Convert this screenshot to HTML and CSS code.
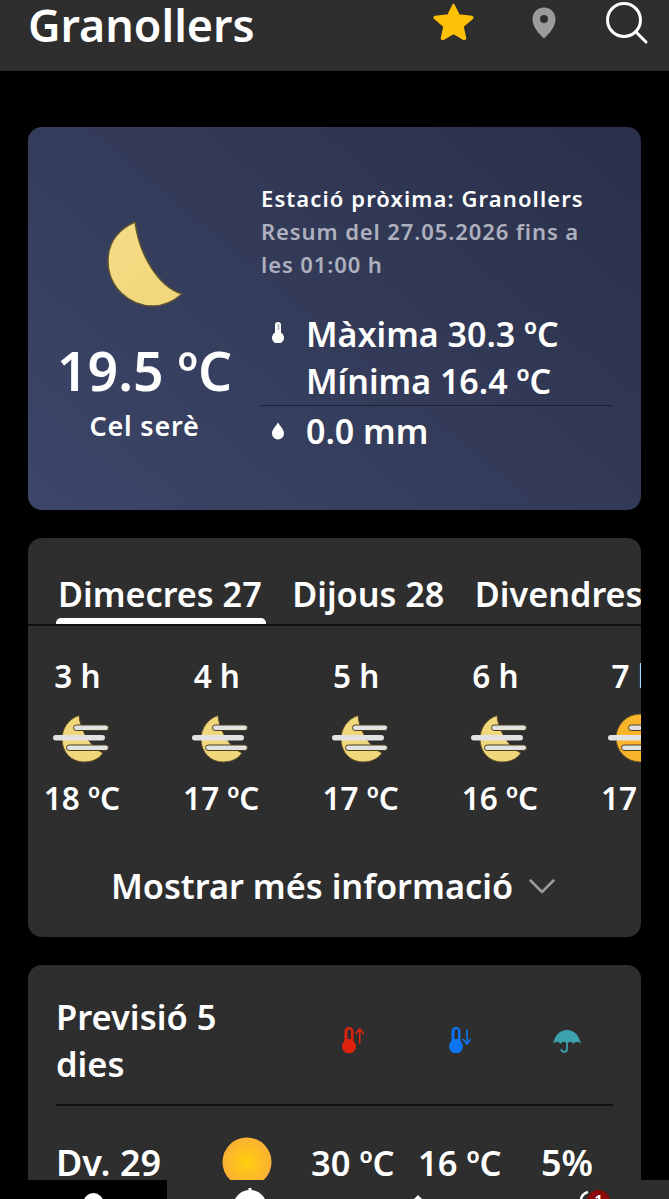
FILE: index.html
```html
<!DOCTYPE html>
<html lang="ca">
<head>
<meta charset="UTF-8" />
<meta name="viewport" content="width=device-width, initial-scale=1" />
<title>Granollers</title>
<link rel="stylesheet" href="styles.css">
</head>
<body>

<svg class="defs" width="0" height="0">
  <defs>
    <linearGradient id="moonFill" x1="0" y1="0" x2="1" y2="1">
      <stop offset="0" stop-color="#f5dc85" />
      <stop offset="1" stop-color="#f0d77c" />
    </linearGradient>
    <radialGradient id="sunFill">
      <stop offset="0" stop-color="#ffcf0d" />
      <stop offset="1" stop-color="#fbb034" />
    </radialGradient>
    <symbol id="fog-moon" viewBox="0 0 56 48">
      <path d="M26 0.500 C15 4 9 14 9 24 C9 37 18 47 31 47 C39 47 46 44 50 38 C38 33 27 15 26 0.500 Z" fill="#f0d77c" stroke="#5c4f28" stroke-width="1" />
      <rect x="20.500" y="10" width="35" height="5.500" rx="2.700" fill="#e2e2e2" stroke="#4a3f20" stroke-width="1" />
      <rect x="13.500" y="30" width="42" height="5.500" rx="2.700" fill="#e2e2e2" stroke="#4a3f20" stroke-width="1" />
      <rect x="0" y="20" width="52" height="5.500" rx="2.700" fill="#e2e2e2" />
    </symbol>
    <symbol id="thermo" viewBox="0 0 22 27">
      <path fill-rule="evenodd" d="M2.500 4.500 A4.500 4.500 0 0 1 11.500 4.500 V14 A7 7 0 1 1 2.500 14 Z M5.500 4 V12 H9 V4 A1.750 1.750 0 0 0 5.500 4 Z" />
    </symbol>
  </defs>
</svg>

<header class="topbar">
  <h1>Granollers</h1>
  <div class="topbar-icons">
    <svg class="icon-star" viewBox="0 0 24 24" preserveAspectRatio="none"><path d="M12 1.500 L15.200 8.300 L22.600 9.200 C23.200 9.300 23.400 10 23 10.400 L17.500 15.500 L19 22.800 C19.100 23.400 18.500 23.800 18 23.500 L12 19.800 L6 23.500 C5.500 23.800 4.900 23.400 5 22.800 L6.500 15.500 L1 10.400 C0.600 10 0.800 9.300 1.400 9.200 L8.800 8.300 Z" fill="#ffc107" stroke="#ffc107" stroke-linejoin="round" /></svg>
    <svg class="icon-pin" viewBox="0 0 24 32"><path fill-rule="evenodd" d="M12 0.500 C5 0.500 0.500 6 0.500 12.500 C0.500 20 8 28 12 31.500 C16 28 23.500 20 23.500 12.500 C23.500 6 19 0.500 12 0.500 Z M12 8 A4 4 0 1 1 12 16 A4 4 0 1 1 12 8 Z" fill="#9b9b9b" /></svg>
    <svg class="icon-search" viewBox="0 0 44 44"><circle cx="19" cy="19" r="16.500" fill="none" stroke="#fff" stroke-width="3" /><path d="M31 31 L41 41" stroke="#fff" stroke-width="3" stroke-linecap="round" /></svg>
  </div>
</header>

<main class="content">

  <section class="card now">
    <div class="now-left">
      <svg class="now-moon" viewBox="0 0 76 86"><path d="M28 1 C12 8 1 21 1 40 C1 66 22 85 46 85 C57 85 67 80 75 73 C50 65 32 32 28 1 Z" fill="url(#moonFill)" stroke="#5f5432" stroke-width="1.500" stroke-linejoin="round" /></svg>
      <div class="now-temp">19.5 ºC</div>
      <div class="now-sky">Cel serè</div>
    </div>
    <div class="now-right">
      <div class="station">Estació pròxima: Granollers</div>
      <div class="summary">Resum del 27.05.2026 fins a les 01:00 h</div>
      <div class="stat-row stat-temps">
        <svg class="icon-thermo" viewBox="0 0 12 21"><path d="M3 3 A3 3 0 0 1 9 3 V10.500 A6 6 0 1 1 3 10.500 Z" fill="#fff" /><path d="M5.500 3 H7.500 M5.500 5 H7.500 M5.500 7 H7.500" stroke="#384263" stroke-width="0.700" /></svg>
        <div>
          <div>Màxima 30.3 ºC</div>
          <div>Mínima 16.4 ºC</div>
        </div>
      </div>
      <div class="stat-row stat-rain">
        <svg class="icon-drop" viewBox="0 0 14 18"><path d="M7 0.500 C9 4 13 7.500 13 11.500 A6 6 0 0 1 1 11.500 C1 7.500 5 4 7 0.500 Z" fill="#fff" /></svg>
        <div>0.0 mm</div>
      </div>
    </div>
  </section>

  <section class="card hourly">
    <div class="tabs">
      <div class="tab active">Dimecres 27</div>
      <div class="tab">Dijous 28</div>
      <div class="tab">Divendres 29</div>
    </div>
    <div class="hours">
      <div class="hour">
        <div class="hour-label">3 h</div>
        <svg class="hour-icon"><use href="#fog-moon" /></svg>
        <div>18 ºC</div>
      </div>
      <div class="hour">
        <div class="hour-label">4 h</div>
        <svg class="hour-icon"><use href="#fog-moon" /></svg>
        <div>17 ºC</div>
      </div>
      <div class="hour">
        <div class="hour-label">5 h</div>
        <svg class="hour-icon"><use href="#fog-moon" /></svg>
        <div>17 ºC</div>
      </div>
      <div class="hour">
        <div class="hour-label">6 h</div>
        <svg class="hour-icon"><use href="#fog-moon" /></svg>
        <div>16 ºC</div>
      </div>
      <div class="hour">
        <div class="hour-label">7 h</div>
        <svg class="hour-icon" viewBox="0 0 56 48">
          <circle cx="30" cy="23" r="24" fill="#fbb52a" stroke="#5c4f28" stroke-width="1" />
          <rect x="18.500" y="10" width="37" height="5.500" rx="2.700" fill="#e2e2e2" stroke="#4a3f20" stroke-width="1" />
          <rect x="11.500" y="30" width="44" height="5.500" rx="2.700" fill="#e2e2e2" stroke="#4a3f20" stroke-width="1" />
          <rect x="-2" y="20" width="52" height="5.500" rx="2.700" fill="#e2e2e2" />
        </svg>
        <div>17 ºC</div>
      </div>
    </div>
    <div class="more">
      <span>Mostrar més informació</span>
      <svg class="icon-chevron" viewBox="0 0 26 15"><path d="M1.500 1.500 L13 13 L24.500 1.500" fill="none" stroke="#9b9b9b" stroke-width="2.500" stroke-linecap="round" stroke-linejoin="round" /></svg>
    </div>
  </section>

  <section class="card forecast">
    <div class="forecast-head">
      <h2>Previsió 5 dies</h2>
      <div class="col-icon">
        <svg viewBox="0 0 22 27" class="temp-max"><use href="#thermo" /><path d="M17.700 16.700 V3 M13.500 7 L17.700 2 L21.900 7" fill="none" stroke="currentColor" stroke-width="1.600" /></svg>
      </div>
      <div class="col-icon">
        <svg viewBox="0 0 22 27" class="temp-min"><use href="#thermo" /><path d="M18 2.300 V16 M13.800 12 L18 17 L22 12" fill="none" stroke="currentColor" stroke-width="1.600" /></svg>
      </div>
      <div class="col-icon">
        <svg viewBox="0 0 28 26" class="rain-chance"><path d="M14 0 V3 C21 3 26 8 28 17 C25.500 14 22.500 14 20.500 17 C18.500 14 16 14 14 17 C12 14 9.500 14 7.500 17 C5.500 14 2.500 14 0 17 C2 8 7 3 14 3 Z" /><path d="M14 15 V22 A2.800 2.800 0 0 1 8.400 22" fill="none" stroke="currentColor" stroke-width="1.800" /></svg>
      </div>
    </div>
    <div class="day">
      <div class="day-name">Dv. 29</div>
      <div class="day-icon"><svg viewBox="0 0 50 50"><circle cx="25" cy="25" r="24.500" fill="url(#sunFill)" /></svg></div>
      <div class="day-val">30 ºC</div>
      <div class="day-val day-min">16 ºC</div>
      <div class="day-pct">5%</div>
    </div>
  </section>

</main>

<nav class="bottombar">
  <div class="nav-item nav-first">
    <svg viewBox="0 0 60 19"><circle cx="39.400" cy="23" r="10" fill="#fff" /></svg>
  </div>
  <div class="nav-item">
    <svg viewBox="0 0 60 19"><path d="M29 8 V12" stroke="#fff" stroke-width="3" /><circle cx="29" cy="27" r="17" fill="#fff" /></svg>
  </div>
  <div class="nav-item">
    <svg viewBox="0 0 60 19"><path d="M30 15 L34 19 H26 Z" fill="#fff" /></svg>
  </div>
  <div class="nav-item">
    <svg viewBox="0 0 60 19"><path d="M26 19 Q27 14 33 12" fill="none" stroke="#fff" stroke-width="2.500" /><circle cx="43.500" cy="21.500" r="11.500" fill="#8a0a0a" /><text x="43.500" y="25" class="nav-badge">1</text></svg>
  </div>
</nav>

</body>
</html>
```

FILE: styles.css
```css
* {
  box-sizing: border-box;
}

html, body {
  height: 100%;
}

body {
  margin: 0;
  background: #000;
  color: #fff;
  font-family: "Noto Sans", "Open Sans", sans-serif;
  font-weight: 600;
  overflow: hidden;
}

.defs {
  position: absolute;
}

.topbar {
  height: 71px;
  background: #2e2e2e;
  display: flex;
  align-items: flex-start;
  justify-content: space-between;
  padding: 0 20px 0 28px;
}

.topbar h1 {
  margin: 0;
  font-size: 44.800px;
  line-height: 50px;
  font-weight: 600;
}

.topbar-icons {
  display: flex;
  align-items: flex-start;
}

.icon-star {
  width: 41px;
  height: 38px;
  margin-top: 2px;
}

.icon-pin {
  width: 24px;
  height: 32px;
  margin: 7px 0 0 58px;
}

.icon-search {
  width: 44px;
  height: 44px;
  margin: 1px 0 0 49px;
}

.content {
  padding: 56px 28px 0;
}

.card {
  background: #2e2e2e;
  border-radius: 14px;
  overflow: hidden;
  margin-bottom: 28px;
}

/* current conditions */
.now {
  height: 383px;
  background: linear-gradient(40deg, #3c4669, #2a3049);
  display: flex;
  padding: 57px 28px 0 0;
}

.now-left {
  width: 233px;
  display: flex;
  flex-direction: column;
  align-items: center;
  padding-top: 37px;
}

.now-moon {
  width: 76px;
  height: 86px;
}

.now-temp {
  font-size: 53.500px;
  line-height: 60px;
  margin-top: 34px;
  white-space: nowrap;
}

.now-sky {
  font-size: 27px;
  letter-spacing: 0.800px;
  line-height: 36px;
  margin-top: 7px;
}

.now-right {
  flex: 1;
}

.station {
  font-size: 22px;
  letter-spacing: 1.100px;
  line-height: 28px;
}

.summary {
  font-size: 22px;
  letter-spacing: 0.900px;
  line-height: 33px;
  color: #aeb1bd;
  margin-top: 3px;
  padding-right: 10px;
}

.stat-row {
  display: flex;
  font-size: 34px;
}

.stat-temps {
  line-height: 47px;
  margin-top: 30px;
  border-bottom: 1px solid #1d2136;
}

.stat-rain {
  line-height: 50px;
}

.stat-row svg {
  flex: none;
}

.icon-thermo {
  width: 12px;
  height: 21px;
  margin: 11px 22px 0 11px;
}

.icon-drop {
  width: 14px;
  height: 18px;
  margin: 16px 21px 0 10px;
}

/* hourly tabs */
.hourly {
  height: 399px;
}

.tabs {
  display: flex;
  gap: 24.500px;
  height: 88px;
  padding: 33px 0 0 28px;
  border-bottom: 2px solid #111;
  font-size: 34.200px;
  line-height: 46px;
  white-space: nowrap;
  overflow: hidden;
}

.tab {
  position: relative;
  padding: 0 4px 0 2px;
  flex: none;
}

.tab.active::after {
  content: "";
  position: absolute;
  left: 0;
  right: 0;
  bottom: 0;
  height: 6px;
  background: #fff;
  border-radius: 5px 5px 0 0;
}

.hours {
  display: flex;
  gap: 31.300px;
  padding-top: 27px;
  white-space: nowrap;
}

.hour {
  flex: none;
  width: 108px;
  display: flex;
  flex-direction: column;
  align-items: center;
  font-size: 31.500px;
  line-height: 46px;
}

.hour-label {
  margin-right: 9px;
}

.hour-icon {
  width: 56px;
  height: 48px;
  margin: 16px 2px 12px 0;
  overflow: visible;
}

.more {
  display: flex;
  justify-content: center;
  align-items: center;
  gap: 16px;
  margin-top: 42px;
  font-size: 34.300px;
  line-height: 46px;
}

.icon-chevron {
  width: 26px;
  height: 15px;
  margin-right: 3px;
}

/* five day forecast */
.forecast {
  margin-bottom: 0;
  padding: 28px 28px 0;
}

.forecast-head {
  display: flex;
  align-items: center;
  height: 113px;
  border-bottom: 2px solid #111;
  padding-bottom: 17px;
}

.forecast-head h2 {
  flex: none;
  margin: 0;
  width: 243.500px;
  padding-right: 40px;
  font-size: 34.500px;
  line-height: 47px;
  font-weight: 600;
}

.col-icon {
  flex: none;
  width: 107px;
  display: flex;
  justify-content: center;
}

.col-icon svg {
  width: 22px;
  height: 27px;
  fill: currentColor;
}

.col-icon .rain-chance {
  width: 28px;
  height: 26px;
  color: #3aa1ad;
}

.temp-max {
  color: #e0230f;
}

.temp-min {
  color: #0d75f0;
}

.day {
  display: flex;
  align-items: center;
  height: 112px;
  font-size: 34.500px;
}

.day-name {
  width: 166px;
  font-size: 36px;
}

.day-icon {
  width: 89px;
}

.day-icon svg {
  display: block;
  width: 50px;
  height: 50px;
}

.day-val {
  width: 107px;
}

.day-min {
  width: 123px;
}

.day-pct {
  font-size: 36px;
}

/* bottom navigation, cut off by the window edge */
.bottombar {
  position: fixed;
  left: 0;
  right: 0;
  bottom: 0;
  height: 19px;
  display: flex;
  background: #2e2e2e;
}

.nav-item {
  flex: 1;
  display: flex;
  justify-content: center;
  overflow: hidden;
}

.nav-first {
  background: #000;
}

.nav-item svg {
  width: 60px;
  height: 19px;
}

.nav-badge {
  fill: #fff;
  font-size: 14px;
  font-weight: 700;
  text-anchor: middle;
}
```
